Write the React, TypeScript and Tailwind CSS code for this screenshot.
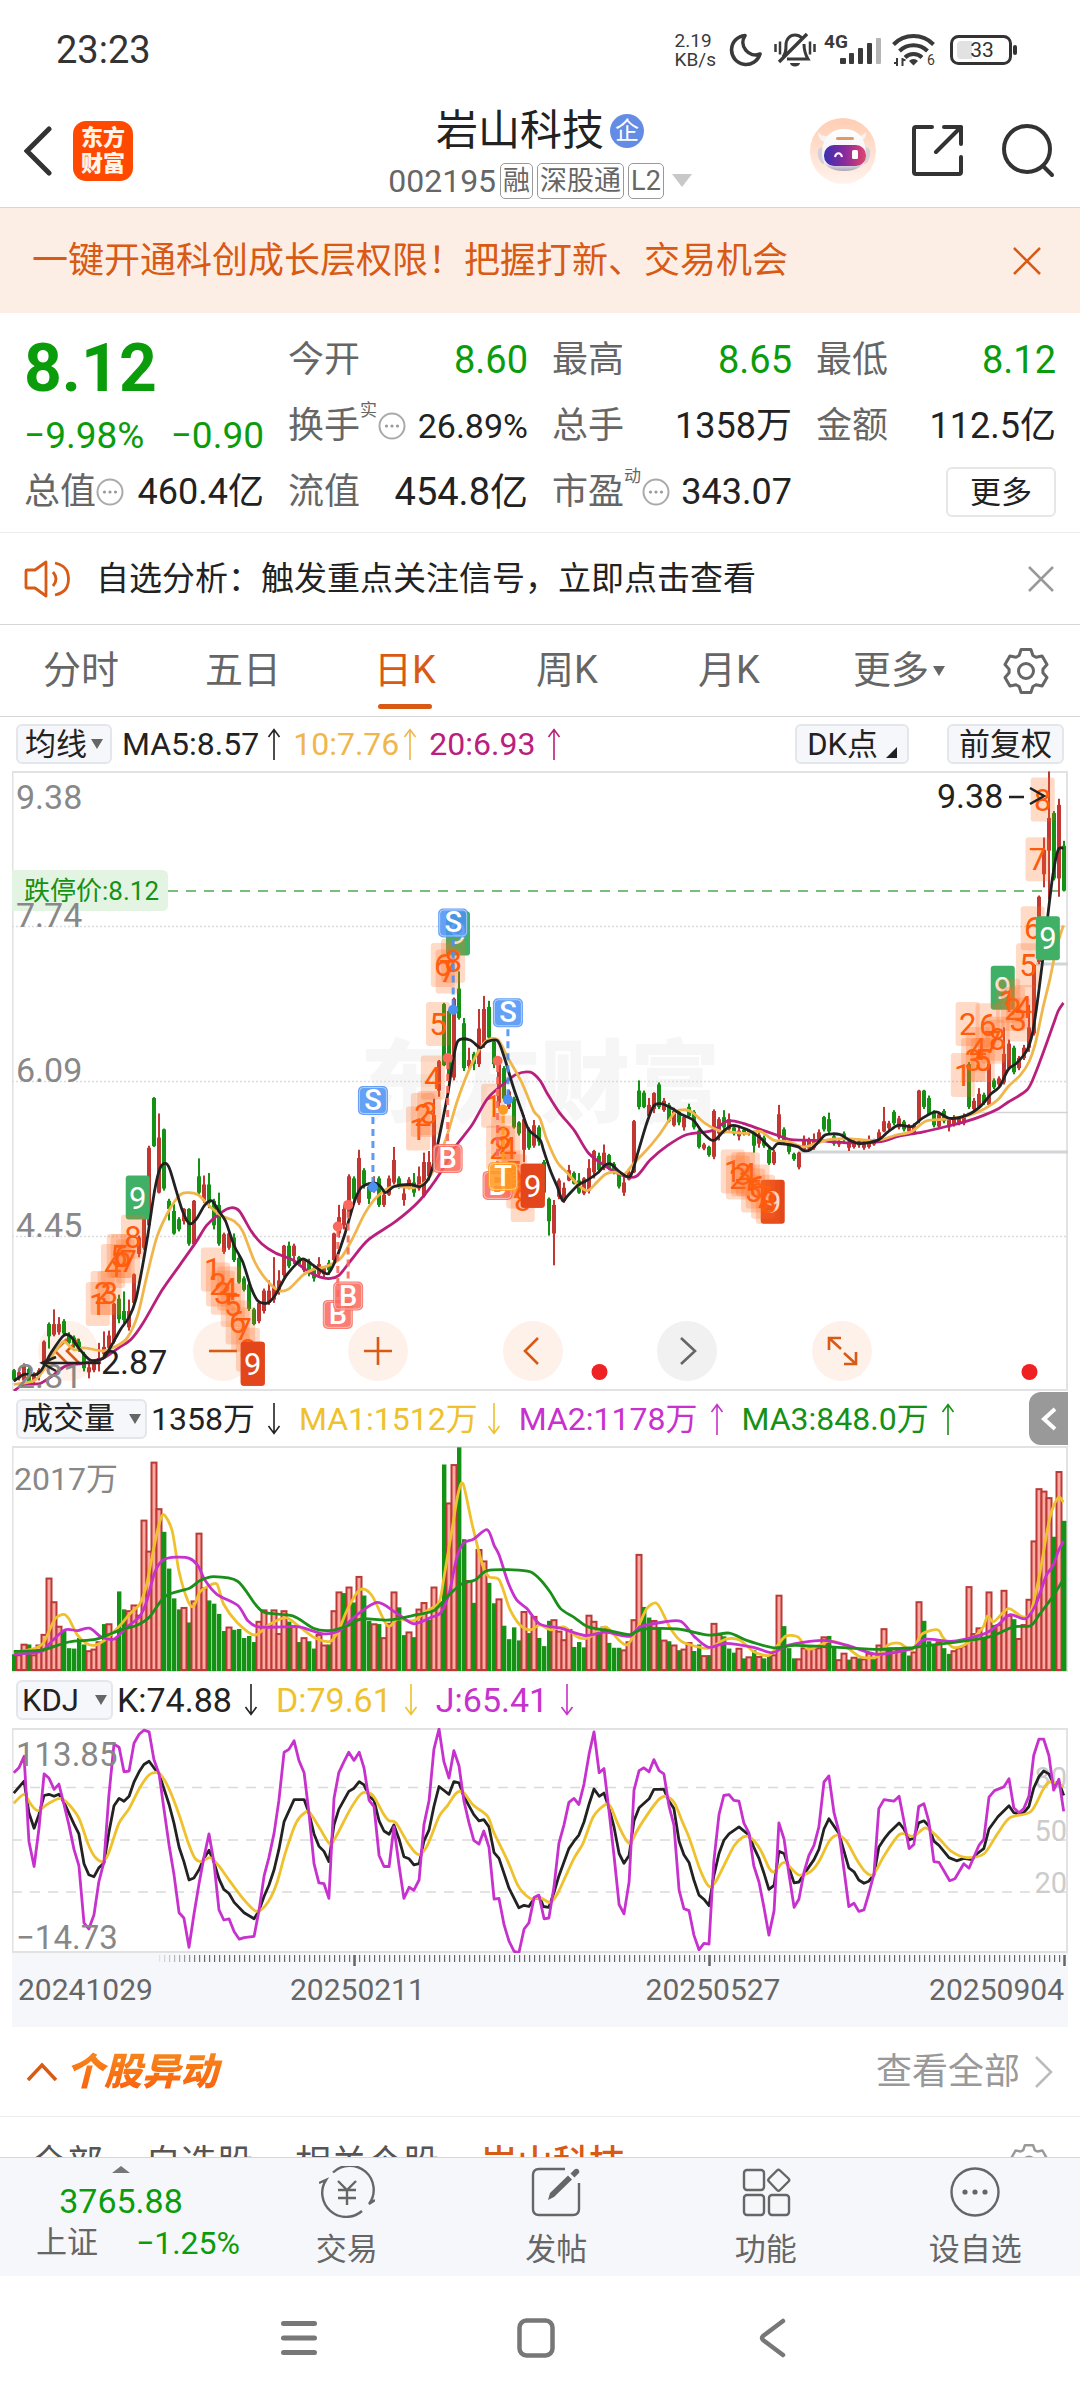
import React from "react";

const RED = "#c23732";
const GREEN = "#159115";
const ORANGE = "#d85a14";

/* ---------- chart data ---------- */

// Plot units per pixel, horizontally and vertically.
const UX = 2.904;
const UY = 2.45;

// One candle per trading day: colour, high, body top, body bottom, low.
const CANDLES = `
g 1492 1495 1518 1520|r 1490 1500 1515 1520|r 1478 1485 1520 1525|g 1488 1492 1525 1530|r 1500 1505 1520 1528|r 1490 1495 1510 1520
r 1422 1425 1475 1490|g 1378 1382 1412 1442|r 1346 1382 1408 1412|r 1365 1382 1402 1408|g 1370 1375 1405 1412|g 1402 1410 1428 1432
g 1410 1415 1430 1440|g 1418 1425 1440 1450|g 1450 1455 1490 1498|r 1480 1488 1500 1515|r 1475 1480 1495 1500|r 1428 1465 1480 1498
r 1400 1438 1455 1460|r 1398 1410 1440 1460|r 1330 1332 1425 1430|g 1310 1320 1370 1380|g 1302 1350 1372 1380|r 1322 1350 1390 1398
r 1258 1260 1330 1334|r 1165 1170 1210 1218|r 1100 1110 1195 1200|r 945 950 1140 1150|g 826 828 946 948|r 866 925 1060 1062
g 903 905 1050 1055|g 1075 1080 1100 1128|g 1088 1105 1160 1163|g 1120 1125 1150 1155|r 1098 1100 1130 1138|g 1098 1100 1185 1190
r 1078 1080 1186 1188|g 976 1020 1060 1068|r 1018 1040 1080 1085|g 1012 1040 1085 1098|g 1075 1080 1140 1150|g 1060 1090 1185 1190
r 1158 1162 1205 1210|r 1150 1160 1195 1200|g 1160 1170 1225 1230|g 1215 1220 1280 1283|g 1265 1270 1298 1302|g 1280 1285 1345 1350
g 1342 1346 1382 1385|r 1325 1330 1375 1380|r 1295 1300 1350 1356|r 1275 1300 1330 1335|r 1218 1290 1322 1330|r 1250 1275 1300 1310
r 1188 1190 1262 1268|g 1180 1190 1240 1245|r 1185 1190 1215 1235|g 1215 1218 1235 1240|r 1220 1225 1250 1255|g 1222 1228 1250 1265
g 1240 1245 1270 1278|r 1218 1235 1260 1265|r 1240 1245 1260 1270|g 1225 1232 1250 1262|r 1158 1160 1225 1230|r 1090 1120 1160 1170
r 1090 1100 1140 1150|r 1015 1020 1120 1125|g 1020 1025 1075 1082|r 955 975 1085 1090|g 1000 1005 1040 1050|g 1035 1045 1075 1088
r 1020 1035 1055 1060|g 1020 1025 1090 1095|r 1060 1065 1090 1095|r 1018 1025 1065 1068|r 948 980 1035 1040|g 1020 1025 1045 1050
r 1045 1062 1078 1092|r 1022 1028 1048 1052|g 1012 1035 1060 1070|r 996 1020 1050 1055|r 962 985 1068 1072|r 958 985 1020 1030
r 830 870 985 990|r 735 738 810 825|g 595 598 748 750|g 612 615 785 790|r 582 585 778 785|g 518 560 632 636
g 632 645 755 762|r 705 735 750 760|g 715 720 745 760|r 610 658 745 752|r 578 610 698 705|g 590 605 680 685
g 685 690 745 755|r 735 740 840 855|g 750 755 830 835|r 808 812 850 855|g 825 830 900 903|g 885 888 915 920
r 870 880 955 985|g 900 905 950 955|r 882 895 945 950|g 895 900 935 945|g 980 985 1060 1075|g 1072 1075 1130 1165
r 1078 1090 1160 1238|r 1025 1030 1070 1076|r 1035 1048 1080 1085|r 992 1005 1030 1032|g 1008 1012 1038 1040|g 1012 1030 1060 1063
r 1022 1025 1062 1066|r 978 1000 1055 1062|r 955 958 1010 1025|g 962 970 1005 1012|r 942 962 1000 1005|g 965 968 1000 1005
g 985 990 1010 1015|g 1010 1012 1045 1050|r 1020 1035 1060 1068|r 1002 1010 1028 1030|r 882 885 1010 1012|g 785 810 850 856
g 810 815 850 853|r 828 845 872 878|r 814 816 855 865|g 790 795 850 855|r 828 835 858 862|g 840 845 885 888
r 852 860 895 898|g 858 862 888 895|r 870 875 900 908|g 842 850 872 876|g 858 862 900 905|g 905 908 948 952
r 938 942 952 956|g 945 948 968 972|r 856 860 972 978|r 875 880 915 932|g 858 875 900 915|r 866 880 905 908
g 895 900 915 920|r 900 908 922 932|g 902 906 916 920|r 904 908 915 920|g 908 912 945 962|r 912 918 940 950
g 920 925 945 950|g 950 955 988 992|r 955 960 988 992|r 845 868 925 930|g 900 905 935 940|g 930 935 960 966
g 962 965 978 982|r 960 962 998 1003|r 920 930 955 958|r 925 930 952 958|r 915 930 950 955|r 905 912 935 940
g 872 875 905 910|g 864 880 910 915|g 918 922 940 945|r 930 935 942 948|g 910 915 930 940|r 930 935 950 958
r 930 935 948 952|r 930 934 944 950|r 930 935 950 955|r 920 930 948 952|r 928 932 942 945|r 905 912 930 935
r 850 885 910 912|r 884 890 902 908|g 858 862 890 895|r 872 878 900 905|g 882 886 905 910|r 892 898 910 918
r 890 895 912 918|r 808 810 885 890|g 808 810 850 855|g 822 828 868 870|g 858 862 895 900|r 862 868 898 902
g 855 860 885 890|r 875 880 900 910|r 870 876 893 898|r 872 878 890 895|r 866 872 890 895|g 740 745 850 855
r 828 835 855 862|r 804 818 850 855|g 815 820 840 845|r 738 745 845 850|g 780 785 802 806|r 775 780 795 800
r 655 720 790 795|r 685 695 755 760|g 700 705 765 770|r 725 730 755 760|r 698 705 730 735|r 600 655 705 715
r 500 502 670 675|r 332 335 495 500|r 190 220 280 312|r 28 142 222 342|g 125 130 290 295|r 95 110 290 335|g 198 210 320 322`
  .trim()
  .split(/[|\n]/)
  .map((row) => {
    const [colour, ...v] = row.trim().split(" ");
    return { up: colour === "r", v: v.map(Number) };
  });

// Traded volume per day, as the top edge of its bar.
const VOLUMES = `g672 r672 r646 g648 r672 r648 r622 r484 r542 r602 g615 g657 g658 g632 g648 r662 r658 r640 g598 r596 r632 g518 g562 r564 r550 r575 r342 r418 r200 r314
g372 g462 g535 g562 r556 g594 r540 r374 r508 g540 g548 g573 g615 r604 g612 g610 g632 g627 g642 r590 r562 r598 r562 r620 r564 g592 r600 g642 r630 g640
g658 r622 r648 g648 r564 r518 g522 r506 g545 r480 g528 g590 r596 g598 r630 r595 r518 g557 g625 r616 g630 r560 r544 g588 r506 r548 g207 r300 r206 g165
g390 r490 g546 r414 r442 g497 g547 r535 g602 g635 g606 g638 r566 g620 r578 g632 g652 g590 r586 r614 r635 r610 g654 g642 g655 r575 r590 g618 r604 g644
g656 g656 r660 r640 r586 r426 g556 g582 r588 g608 r636 g640 r648 g662 r658 r642 g664 g648 r674 g674 r595 r622 g628 g658 g668 r656 g682 r677 g662 r676
g682 g675 r672 r526 g603 g657 g682 r682 r655 r655 r655 r655 r628 g627 g655 r684 r668 g685 r678 g682 r682 r668 g684 r648 r608 g655 r655 r662 g664 g675
r665 r542 g590 g640 g650 r640 g657 g671 r662 r655 r650 r505 r620 r606 g632 r518 g600 r598 r514 r575 g586 r632 r598 r536 r393 r265 r271 r287 g384 r223 g345`
  .trim()
  .split(/\s+/)
  .map((s) => ({ up: s[0] === "r", top: Number(s.slice(1)) }));

// Each line is two halves; the second half starts at 1568 units.
const MA5 = [
  "40,1522 70,1505 100,1507 120,1495 150,1450 185,1410 205,1412 228,1440 262,1470 300,1466 320,1440 350,1395 375,1365 395,1320 415,1235 430,1160 450,1050 465,1000 480,988 492,1000 510,1050 530,1105 550,1136 570,1125 595,1090 615,1080 635,1105 655,1130 680,1190 705,1230 730,1295 750,1326 778,1330 800,1310 830,1265 860,1235 880,1222 905,1235 930,1250 953,1258 975,1225 1000,1165 1030,1080 1050,1047 1085,1036 1105,1045 1120,1060 1145,1045 1190,1040 1220,1045 1245,1025 1260,985 1280,905 1300,820 1315,740 1330,688 1365,686 1395,705 1415,690 1445,688 1465,730 1490,800 1515,860 1535,905 1568,930",
  "10,955 30,1005 50,1045 66,1080 80,1068 110,1042 140,1028 170,1010 190,992 207,990 230,1008 262,1020 285,960 310,890 330,848 350,842 380,852 410,868 445,882 470,910 495,930 510,930 535,908 560,895 600,905 635,922 660,943 675,953 690,940 720,942 750,948 765,957 785,955 810,935 830,918 870,917 900,932 930,940 980,932 1010,912 1040,895 1080,898 1110,878 1150,862 1190,878 1240,870 1280,848 1310,818 1335,800 1360,758 1385,742 1415,710 1430,670 1445,590 1460,490 1475,380 1490,280 1505,220 1520,216",
];
const MA10 = [
  "40,1530 100,1520 130,1490 155,1455 185,1425 215,1445 245,1440 300,1448 340,1435 370,1415 400,1360 425,1270 455,1170 490,1105 520,1068 540,1060 575,1065 605,1090 640,1115 680,1130 705,1155 740,1230 775,1275 810,1300 840,1295 880,1262 910,1248 950,1240 990,1220 1025,1170 1060,1110 1095,1070 1140,1045 1200,1048 1240,1030 1270,985 1300,915 1330,830 1370,745 1410,690 1445,685 1475,730 1515,790 1550,860 1568,878",
  "20,930 50,985 80,1012 110,1040 138,1055 165,1035 190,1015 215,1010 245,1015 270,990 305,960 345,920 390,865 415,857 440,862 480,890 520,908 560,912 600,915 640,910 680,932 720,935 765,948 800,940 840,930 900,928 980,932 1030,920 1080,910 1120,885 1180,880 1240,872 1290,855 1330,832 1360,800 1395,772 1420,740 1440,690 1460,610 1480,540 1500,460 1520,405",
];
const MA20 = [
  "40,1546 70,1530 115,1528 150,1510 190,1485 240,1478 300,1465 345,1440 380,1420 415,1380 470,1300 520,1240 570,1180 600,1140 640,1110 670,1097 695,1105 730,1155 760,1185 800,1208 850,1225 890,1250 930,1267 960,1270 985,1262 1020,1225 1070,1175 1150,1130 1220,1078 1280,1010 1320,950 1370,895 1415,830 1460,795 1500,770 1540,765 1568,785",
  "20,815 55,862 100,908 140,962 190,995 240,1018 280,1020 320,980 370,945 425,918 500,908 545,884 590,890 640,905 685,918 730,930 800,932 900,938 990,935 1040,922 1110,912 1180,898 1240,885 1290,870 1330,855 1360,838 1415,808 1440,765 1460,720 1490,650 1505,615 1520,595",
];
const VOL_MA1 = [
  "40,668 100,658 125,645 140,620 160,585 185,574 200,585 225,625 250,645 275,650 300,640 320,625 350,600 380,570 405,550 425,505 440,440 460,360 475,330 500,370 520,470 545,540 562,555 580,520 605,505 630,500 650,550 690,595 740,625 780,600 830,582 870,605 915,632 960,640 985,610 1010,560 1045,514 1080,528 1125,602 1155,585 1200,590 1240,565 1275,545 1290,480 1310,380 1330,280 1345,255 1370,350 1400,450 1420,482 1450,490 1480,560 1510,600 1540,612 1568,600",
  "30,612 70,605 110,630 140,632 190,605 230,638 255,648 285,605 310,560 335,546 350,560 380,610 410,640 450,652 490,657 540,635 580,637 620,665 665,675 690,650 715,627 750,630 780,660 840,640 880,648 930,678 980,678 1010,650 1045,645 1080,662 1110,622 1155,612 1170,630 1200,655 1240,645 1285,608 1300,578 1318,592 1360,560 1400,580 1425,570 1450,480 1480,340 1505,288 1520,300",
];
const VOL_MA2 = [
  "40,672 120,665 150,640 190,612 225,614 260,608 295,630 330,635 370,605 405,580 425,545 450,470 475,440 515,434 550,437 575,455 595,490 630,525 690,552 720,590 750,605 820,605 870,605 940,622 990,612 1030,580 1095,545 1150,570 1200,597 1250,582 1280,570 1305,520 1325,440 1345,400 1375,390 1415,367 1435,405 1450,430 1475,495 1500,538 1530,560 1568,598",
  "60,608 130,626 190,618 260,628 290,605 360,593 410,592 450,630 490,655 540,645 620,655 675,668 720,650 820,638 900,652 980,672 1080,658 1120,635 1200,640 1290,622 1330,600 1365,575 1410,585 1440,550 1470,480 1490,455 1505,420 1520,395",
];
const VOL_MA3 = [
  "40,665 120,662 200,642 280,635 350,612 400,600 435,580 480,530 550,510 580,492 620,482 690,493 740,548 770,570 850,578 910,608 955,614 1010,602 1050,585 1130,588 1210,575 1260,565 1300,530 1340,500 1380,490 1415,467 1490,465 1540,470 1568,488",
  "30,520 60,560 100,582 140,605 200,614 260,624 300,610 400,610 490,625 550,620 600,638 680,656 740,650 840,654 980,660 1080,656 1130,650 1230,640 1310,628 1375,605 1425,602 1450,575 1490,530 1520,488",
];
const KDJ_J = [
  "40,962 55,950 70,922 84,1130 99,1192 113,1100 128,965 142,975 157,1003 171,990 186,1040 200,1090 215,1150 229,1190 244,1330 258,1345 273,1310 287,1230 302,1180 316,1020 331,892 346,900 360,960 375,958 389,890 404,868 418,858 433,862 447,930 462,965 476,1050 491,1140 505,1210 520,1305 534,1318 549,1390 563,1310 578,1235 592,1170 607,1112 621,1180 636,1298 650,1323 665,1320 680,1352 695,1370 709,1366 738,1363 752,1300 767,1215 781,1170 796,1110 810,1030 825,912 839,905 854,884 868,932 883,962 897,1060 912,1185 926,1232 941,1234 955,1270 970,1025 984,962 999,935 1013,912 1028,932 1043,912 1057,950 1072,1030 1086,1045 1101,1165 1115,1192 1130,1192 1144,1095 1159,1190 1173,1270 1188,1243 1202,1250 1217,1225 1231,1090 1246,1030 1260,905 1275,855 1289,935 1304,975 1318,908 1333,945 1347,1030 1362,1085 1376,1128 1391,1137 1405,1105 1420,1145 1435,1272 1449,1270 1464,1335 1478,1375 1493,1400 1507,1403 1522,1345 1536,1330 1551,1268 1565,1262",
  "12,1320 26,1318 41,1240 55,1135 70,1090 84,1035 99,1025 113,1040 128,990 143,915 157,862 172,962 186,952 201,1060 215,1165 230,1285 244,1308 259,1230 273,1005 288,957 302,950 317,960 331,930 346,957 360,965 375,1045 389,1090 404,1250 418,1295 433,1300 447,1360 462,1396 476,1380 491,1382 505,1180 520,1065 534,1018 549,1016 563,1030 578,1032 592,1085 607,1110 621,1190 636,1230 650,1290 665,1360 680,1300 694,1085 709,1125 723,1210 738,1292 752,1272 767,1205 781,1165 796,1140 810,1095 825,985 839,970 854,1060 868,1105 883,1200 897,1290 912,1282 926,1302 941,1298 955,1258 970,1210 984,1050 999,1028 1028,1032 1043,1020 1057,1080 1072,1148 1086,1138 1100,1045 1115,1038 1129,1080 1144,1180 1159,1182 1190,1227 1205,1222 1231,1185 1246,1196 1275,1140 1289,1125 1304,1022 1320,1006 1347,997 1362,977 1376,1048 1391,1060 1405,1050 1420,1020 1434,920 1449,880 1463,880 1478,920 1492,1005 1507,978 1521,1057",
];
const KDJ_K = [
  "40,1012 70,983 84,1060 99,1098 113,1065 128,1018 142,1015 157,1020 171,1015 186,1035 215,1088 229,1112 244,1185 258,1212 273,1217 287,1195 302,1183 316,1110 331,1043 346,1025 360,1032 375,1020 389,985 404,960 418,942 433,934 447,950 462,965 491,1040 505,1085 520,1145 534,1180 549,1225 563,1220 578,1200 592,1172 607,1152 621,1180 636,1222 650,1248 665,1258 680,1280 709,1305 738,1320 752,1300 767,1265 781,1238 796,1200 810,1150 825,1082 854,1028 883,1028 897,1060 912,1112 926,1142 941,1155 955,1180 970,1090 984,1052 1013,1008 1028,1000 1043,984 1057,992 1072,1020 1086,1030 1101,1080 1115,1105 1130,1113 1144,1090 1159,1125 1173,1168 1188,1173 1202,1188 1217,1185 1231,1130 1246,1102 1260,1045 1275,996 1304,1015 1318,984 1333,987 1347,1020 1376,1065 1391,1080 1405,1077 1420,1095 1435,1158 1449,1172 1478,1245 1507,1293 1522,1287 1536,1290 1551,1270 1568,1268",
  "10,1290 26,1292 41,1255 55,1215 84,1148 99,1130 113,1115 128,1083 143,1038 157,1002 172,1020 186,1012 201,1050 215,1095 230,1160 244,1184 259,1165 273,1080 288,1048 317,1026 331,1003 360,1003 375,1032 389,1050 404,1130 418,1163 433,1182 447,1225 462,1262 476,1272 491,1288 505,1215 520,1160 534,1128 549,1112 578,1095 607,1115 621,1145 636,1172 650,1207 665,1248 680,1238 694,1155 709,1160 723,1195 738,1232 752,1230 767,1210 796,1175 810,1150 825,1100 839,1075 868,1110 897,1195 912,1205 926,1225 941,1233 955,1228 970,1212 984,1145 999,1125 1013,1110 1043,1085 1057,1100 1072,1127 1086,1122 1100,1085 1115,1080 1129,1092 1144,1130 1159,1140 1188,1170 1210,1178 1231,1172 1255,1175 1270,1160 1289,1148 1304,1100 1330,1070 1362,1043 1376,1060 1391,1063 1405,1060 1420,1045 1434,1000 1449,972 1463,958 1478,965 1492,990 1507,985 1521,1018",
];
const KDJ_D = [
  "40,1037 70,1015 90,1040 110,1055 140,1038 175,1025 200,1040 230,1075 255,1135 275,1168 298,1180 315,1160 345,1087 375,1050 405,1000 430,970 447,962 465,965 490,1000 520,1065 545,1130 565,1170 585,1180 610,1170 635,1190 665,1225 705,1270 740,1300 760,1297 785,1270 805,1230 830,1155 860,1085 885,1060 900,1060 930,1100 958,1137 975,1120 1015,1055 1045,1017 1065,1010 1085,1020 1115,1065 1130,1080 1150,1085 1185,1135 1215,1163 1240,1142 1275,1070 1300,1042 1325,1012 1345,1010 1375,1042 1415,1068 1435,1110 1475,1180 1505,1240 1540,1270 1568,1268",
  "30,1280 50,1260 75,1215 100,1170 125,1135 155,1070 190,1040 205,1045 225,1085 245,1120 262,1135 285,1100 320,1055 345,1028 365,1020 390,1035 415,1085 435,1125 465,1200 490,1240 510,1230 540,1180 565,1140 590,1120 610,1120 640,1150 665,1195 680,1205 710,1182 750,1212 785,1205 810,1180 840,1130 865,1115 890,1130 920,1175 945,1205 968,1212 1000,1165 1045,1113 1085,1118 1120,1097 1155,1120 1195,1155 1240,1170 1290,1160 1330,1110 1365,1072 1425,1058 1460,1005 1480,985 1521,997",
];

// Nine-turn counts: centres of the tags 1 to 8, then the closing 9.
type Run = { tags: number[][]; nine: number[]; up: boolean };
const RUNS: Run[] = [
  { up: true, nine: [400, 1072], tags: [[284, 1333], [298, 1306], [318, 1306], [328, 1240], [345, 1215], [356, 1215], [372, 1228], [386, 1168]] },
  { up: false, nine: [734, 1479], tags: [[618, 1248], [633, 1285], [647, 1305], [665, 1295], [676, 1335], [690, 1378], [706, 1395], [720, 1445]] },
  { up: true, nine: [1330, 425], tags: [[1214, 903], [1228, 870], [1246, 865], [1257, 778], [1272, 647], [1286, 502], [1300, 518], [1316, 492]] },
  { up: false, nine: [1547, 1043], tags: [[1432, 847], [1446, 950], [1461, 925], [1476, 950], [1490, 1010], [1495, 1020], [1505, 1045], [1518, 1078]] },
  { up: false, nine: [2244, 1082], tags: [[2128, 1008], [2143, 1023], [2158, 1015], [2172, 1015], [2187, 1055], [2200, 1045], [2216, 1070], [2230, 1083]] },
  { up: true, nine: [2912, 558], tags: [[2796, 772], [2810, 647], [2826, 735], [2840, 708], [2854, 735], [2868, 650], [2883, 690], [2897, 683]] },
  { up: true, nine: [3043, 437], tags: [[2928, 590], [2942, 610], [2957, 636], [2973, 605], [2985, 503], [2999, 412], [3013, 243], [3028, 97]] },
];

const SIGNALS = [
  { t: "B", x: 981, y: 1357, dot: 1143 },
  { t: "B", x: 1011, y: 1312, dot: 1090 },
  { t: "S", x: 1083, y: 833, dot: 1047 },
  { t: "B", x: 1300, y: 975, dot: 730 },
  { t: "S", x: 1316, y: 398, dot: 612 },
  { t: "B", x: 1445, y: 1041, dot: 737 },
  { t: "T", x: 1461, y: 1019, dot: 857 },
  { t: "S", x: 1475, y: 618, dot: 832 },
];
const SIGNAL_FILL: Record<string, string> = { S: "#4a90f5", B: "#f9695c", T: "#ff9a1f" };

const sx = (x: number) => x / UX - 12;
const barX = (i: number) => 2 + 5 * i;

function toPoints(halves: string[], y0: number) {
  return halves.flatMap((half, h) =>
    half.split(" ").map((p) => {
      const [x, y] = p.split(",").map(Number);
      return [sx(x + h * 1568), y / UY - y0];
    }),
  );
}

function smooth(pts: number[][]) {
  let d = `M${pts[0][0].toFixed(1)} ${pts[0][1].toFixed(1)}`;
  for (let i = 0; i < pts.length - 1; i++) {
    const a = pts[Math.max(i - 1, 0)];
    const b = pts[i];
    const c = pts[i + 1];
    const e = pts[Math.min(i + 2, pts.length - 1)];
    const k = 7;
    d += `C${(b[0] + (c[0] - a[0]) / k).toFixed(1)} ${(b[1] + (c[1] - a[1]) / k).toFixed(1)} ${(c[0] - (e[0] - b[0]) / k).toFixed(1)} ${(c[1] - (e[1] - b[1]) / k).toFixed(1)} ${c[0].toFixed(1)} ${c[1].toFixed(1)}`;
  }
  return d;
}

function Line({ data, y0, color, straight }: { data: string[]; y0: number; color: string; straight?: boolean }) {
  const pts = toPoints(data, y0);
  const d = straight ? "M" + pts.map((p) => `${p[0].toFixed(1)} ${p[1].toFixed(1)}`).join("L") : smooth(pts);
  return <path d={d} fill="none" stroke={color} strokeWidth={2.8} strokeLinejoin="round" />;
}

/* ---------- icons ---------- */

function gearPath(c: number, outer: number, inner: number) {
  const pts: string[] = [];
  for (let k = 0; k < 6; k++) {
    const steps = [[-24, inner], [-13, outer], [13, outer], [24, inner]];
    for (const [off, r] of steps) {
      const a = ((-90 + 60 * k + off) * Math.PI) / 180;
      pts.push(`${(c + r * Math.cos(a)).toFixed(1)} ${(c + r * Math.sin(a)).toFixed(1)}`);
    }
  }
  return "M" + pts.join("L") + "Z";
}

function Gear({ size, color }: { size: number; color: string }) {
  return (
    <svg width={size} height={size} viewBox="0 0 48 48" fill="none" stroke={color} strokeWidth={3} strokeLinejoin="round">
      <path d={gearPath(24, 22, 17)} />
      <circle cx={24} cy={24} r={7.5} />
    </svg>
  );
}

function Dots() {
  return (
    <svg width={28} height={28} viewBox="0 0 28 28" className="shrink-0" fill="none">
      <circle cx={14} cy={14} r={12.5} stroke="#aaa" strokeWidth={2} />
      <g fill="#999">
        <circle cx={8.5} cy={14} r={1.6} />
        <circle cx={14} cy={14} r={1.6} />
        <circle cx={19.5} cy={14} r={1.6} />
      </g>
    </svg>
  );
}

function Trend({ dir, color }: { dir: "up" | "down"; color: string }) {
  return (
    <svg width={14} height={32} viewBox="0 0 14 32" className="shrink-0" fill="none" stroke={color} strokeWidth={1.6}>
      {dir === "up" ? <path d="M7 32V2M1.500 9 7 1.500 12.500 9" /> : <path d="M7 0v30M1.500 23 7 30.500 12.500 23" />}
    </svg>
  );
}

function Caret({ size = 12 }: { size?: number }) {
  return (
    <svg width={size} height={size} viewBox="0 0 12 12" className="shrink-0">
      <path d="M0 1h12L6 11z" fill="#666" />
    </svg>
  );
}

function StatusIcons() {
  return (
    <div className="flex items-center text-[#3a3a3a]">
      <div className="text-[19px] leading-[19px]">
        <div>2.19</div>
        <div>KB/s</div>
      </div>
      <svg width={34} height={34} viewBox="0 0 34 34" className="ml-3" fill="none" stroke="currentColor" strokeWidth={3.6} strokeLinejoin="round">
        <path d="M17 2.500A14.500 14.500 0 1 0 32 21 12.500 12.500 0 0 1 17 2.500Z" />
      </svg>
      <svg width={42} height={36} viewBox="0 0 42 36" className="ml-3" fill="none" stroke="currentColor" strokeWidth={3}>
        <path d="M9 25c3-4 3-7 3-12 0-6 4-10 9-10 3 0 5 1 7 3M30 12c0 6 1 10 4 15H13" />
        <path d="M5 30 33 2" strokeWidth={3.400} />
        <path d="M1.500 12v8M6 9.500v13M40.500 12v8M36 9.500v13" strokeWidth={2.500} />
        <path d="M16 31h10a5 3.500 0 0 1-10 0Z" fill="currentColor" stroke="none" />
      </svg>
      <svg width={60} height={34} viewBox="0 0 60 34" className="ml-2" fill="currentColor">
        <text x={0} y={15} fontSize={19} fontWeight={700}>4G</text>
        <rect x={16} y={25} width={6} height={6} rx={1} />
        <rect x={25} y={20} width={5} height={11} rx={1} />
        <rect x={34} y={15} width={5} height={16} rx={1} />
        <rect x={43} y={10} width={5} height={21} rx={1} />
        <rect x={52} y={5} width={5} height={26} rx={1} fill="#b5b5b5" />
      </svg>
      <svg width={46} height={34} viewBox="0 0 46 34" className="ml-2" fill="none" stroke="currentColor" strokeWidth={4}>
        <path d="M1.500 11.500a28 28 0 0 1 40 0" />
        <path d="M7.500 18a20 20 0 0 1 28 0" />
        <path d="M13 24.500a12 12 0 0 1 17 0" />
        <path d="M17 28a6 6 0 0 1 9 0l-4.500 4.500Z" fill="currentColor" stroke="none" />
        <path d="M5 25v8M10.500 25v8M2 30h3M10.500 27h3" strokeWidth={2} />
        <text x={35} y={32} fontSize={14} fill="currentColor" stroke="none">6</text>
      </svg>
      <svg width={68} height={30} viewBox="0 0 68 30" className="ml-3" fill="none">
        <rect x={1.500} y={1.500} width={59} height={27} rx={7} stroke="#333" strokeWidth={3} />
        <path d="M11 6h11v18H11a4 4 0 0 1-4-4V10a4 4 0 0 1 4-4Z" fill="#e2e2e2" />
        <rect x={63} y={10} width={4} height={10} rx={2} fill="#333" />
        <text x={32} y={22} fontSize={21} textAnchor="middle" fill="#333">33</text>
      </svg>
    </div>
  );
}

function Robot() {
  return (
    <svg width={66} height={66} viewBox="0 0 66 66">
      <defs>
        <linearGradient id="halo" x1="0" y1="0" x2="0" y2="1">
          <stop offset="0" stopColor="#ffcdb3" />
          <stop offset="1" stopColor="#fff3ec" />
        </linearGradient>
        <linearGradient id="visor" x1="0" y1="0" x2="1" y2="0">
          <stop offset="0" stopColor="#3a2fb0" />
          <stop offset="0.500" stopColor="#8a2a9c" />
          <stop offset="1" stopColor="#e0466a" />
        </linearGradient>
        <linearGradient id="shell" x1="0" y1="0" x2="0" y2="1">
          <stop offset="0" stopColor="#ffffff" />
          <stop offset="0.800" stopColor="#f1eef3" />
          <stop offset="1" stopColor="#a9a3b6" />
        </linearGradient>
      </defs>
      <circle cx={33} cy={33} r={33} fill="url(#halo)" />
      <path d="M8 14c0 5 2 8 6 10l6-6c-5 1-9 0-12-4ZM56 14c0 5-2 8-6 10l-6-6c5 1 9 0 12-4Z" fill="#f8f2f2" />
      <path d="M8 32c2-3 4-3 6-2v16c-4-1-7-7-6-14ZM60 32c-2-3-4-3-6-2v16c4-1 7-7 6-14Z" fill="#d5d0d8" />
      <path d="M12 36c0-15 8-25 22-25s22 10 22 25c0 11-8 17-22 17s-22-6-22-17Z" fill="url(#shell)" />
      <rect x={26} y={19} width={18} height={3} rx={1.500} fill="#e39a62" />
      <rect x={14} y={27} width={42} height={21} rx={10} fill="url(#visor)" />
      <path d="M25 39c1-5 6-5 7 0" fill="none" stroke="#fff" strokeWidth={2} />
      <rect x={42} y={32} width={6} height={9} rx={1.500} fill="#fff" />
    </svg>
  );
}

/* ---------- page parts ---------- */

function Header() {
  return (
    <header className="flex h-[132px] items-center justify-between border-b border-[#d6d6d6] px-6 pt-[18px]">
      <div className="flex w-[300px] items-center">
        <button aria-label="返回">
          <svg width={28} height={50} viewBox="0 0 28 50" fill="none" stroke="#333" strokeWidth={5} strokeLinecap="round">
            <path d="M25 3 3 25l22 22" />
          </svg>
        </button>
        <div className="ml-[21px] grid size-[60px] place-content-center rounded-[13px] bg-[#ff4800] text-center text-[22px] leading-[26px] font-black text-[#fff3ea]">
          东方<br />财富
        </div>
      </div>
      <div className="flex flex-col items-center pt-1">
        <div className="flex items-center gap-[6px]">
          <h1 className="text-[42px] leading-[48px] text-[#222]">岩山科技</h1>
          <span className="grid size-[34px] place-content-center rounded-full bg-[#648ce4] text-[24px] leading-6 text-white">企</span>
        </div>
        <button className="mt-2 flex items-center gap-1 text-[#666]">
          <span className="text-[32px] leading-9">002195</span>
          {["融", "深股通", "L2"].map((t) => (
            <span key={t} className="rounded-[5px] border border-[#999] px-[2px] text-[27px] leading-[34px]">{t}</span>
          ))}
          <svg width={20} height={14} viewBox="0 0 20 14" className="ml-1">
            <path d="M0 0h20L10 13z" fill="#c8c8c8" />
          </svg>
        </button>
      </div>
      <div className="flex w-[300px] items-center justify-end">
        <button aria-label="智能助手"><Robot /></button>
        <button aria-label="分享" className="ml-9">
          <svg width={52} height={52} viewBox="0 0 52 52" fill="none" stroke="#333" strokeWidth={4} strokeLinecap="round" strokeLinejoin="round">
            <path d="M20 2H4Q2 2 2 4v43q0 2 2 2h43q2 0 2-2V32M32 2h17v17M49 2 24 27" />
          </svg>
        </button>
        <button aria-label="搜索" className="ml-[38px]">
          <svg width={54} height={54} viewBox="0 0 54 54" fill="none" stroke="#333" strokeWidth={4} strokeLinecap="round">
            <circle cx={25} cy={25} r={23} />
            <path d="m41 42 9 9" />
          </svg>
        </button>
      </div>
    </header>
  );
}

function Cell({ label, sup, dots, value, valueClass }: { label: string; sup?: string; dots?: boolean; value: string; valueClass: string }) {
  return (
    <div className="flex items-center justify-between whitespace-nowrap">
      <dt className="flex items-center text-[36px] text-[#666]">
        {label}
        {sup && <sup className="-top-4 w-[18px] text-[17px] leading-4">{sup}</sup>}
        {dots && <Dots />}
      </dt>
      <dd className={valueClass}>{value}</dd>
    </div>
  );
}

function Quote() {
  return (
    <section className="border-b border-[#ececec] px-6 pt-[14px] pb-[7px]">
      <dl className="grid auto-rows-[66px] grid-cols-4 gap-x-6 leading-none">
        <div className="row-span-2 flex flex-col text-[#0b9c0b]">
          <dd className="pt-2 text-[66px] leading-[68px] font-bold">8.12</dd>
          <dd className="mt-[14px] flex justify-between text-[37px]">
            <span>−9.98%</span>
            <span>−0.90</span>
          </dd>
        </div>
        <Cell label="今开" value="8.60" valueClass="text-[38px] text-[#0b9c0b]" />
        <Cell label="最高" value="8.65" valueClass="text-[38px] text-[#0b9c0b]" />
        <Cell label="最低" value="8.12" valueClass="text-[38px] text-[#0b9c0b]" />
        <Cell label="换手" sup="实" dots value="26.89%" valueClass="text-[34px] text-[#222]" />
        <Cell label="总手" value="1358万" valueClass="text-[36px] text-[#222]" />
        <Cell label="金额" value="112.5亿" valueClass="text-[36px] text-[#222]" />
        <Cell label="总值" dots value="460.4亿" valueClass="text-[36px] text-[#222]" />
        <Cell label="流值" value="454.8亿" valueClass="text-[38px] text-[#222]" />
        <Cell label="市盈" sup="动" dots value="343.07" valueClass="text-[36px] text-[#222]" />
        <div className="flex items-center justify-end">
          <button className="h-[50px] rounded-md border-2 border-[#e6e6e6] px-[22px] text-[31px] leading-none text-[#222]">更多</button>
        </div>
      </dl>
    </section>
  );
}

function Periods() {
  const tabs = ["分时", "五日", "日K", "周K", "月K", "更多"];
  return (
    <nav className="flex h-[92px] border-b border-[#d6d6d6]">
      <div className="grid flex-[9] grid-cols-6">
        {tabs.map((t) => (
          <button
            key={t}
            className={
              t === "日K"
                ? "relative flex items-center justify-center text-[38px] text-[#d85a14]"
                : t === "更多"
                  ? "flex items-center justify-center gap-1 pl-4 text-[38px] text-[#666]"
                  : "flex items-center justify-center text-[38px] text-[#666]"
            }
          >
            {t}
            {t === "更多" && <Caret />}
            {t === "日K" && <span className="absolute bottom-[7px] h-[5px] w-[54px] rounded-full bg-[#d85a14]" />}
          </button>
        ))}
      </div>
      <button aria-label="设置" className="grid flex-1 place-items-center">
        <Gear size={48} color="#666" />
      </button>
    </nav>
  );
}

const CHIP = "flex h-10 items-center rounded-md border-2 border-[#e3e6eb] bg-[#f6f7fa] text-[31px] leading-none text-[#222]";

function Reading({ text, dir, color, size, className }: { text: string; dir: "up" | "down"; color: string; size: string; className: string }) {
  return (
    <span className={`flex items-center whitespace-nowrap ${size} ${className}`} style={{ color }}>
      {text}
      <Trend dir={dir} color={color} />
    </span>
  );
}

function Badge({ x, y, digit, up }: { x: number; y: number; digit: number; up?: boolean }) {
  const cx = sx(x);
  const cy = y / UY - 11;
  const last = digit === 9;
  return (
    <g>
      <rect x={cx - 12} y={cy - 22} width={24} height={44} rx={3} fill={last ? (up ? "#3fb065" : "#e2461a") : "#ff6a1f"} fillOpacity={last ? 1 : 0.25} />
      <text x={cx} y={cy + 11} textAnchor="middle" fontSize={31} fill={last ? "#fff" : "#ff5a0a"}>{digit}</text>
    </g>
  );
}

function Signal({ t, x, y, dot }: { t: string; x: number; y: number; dot: number }) {
  const cx = sx(x);
  const cy = y / UY - 11;
  const dy = dot / UY - 11;
  const fill = SIGNAL_FILL[t];
  return (
    <g>
      <path d={`M${cx} ${cy + (dy > cy ? 17 : -17)}V${dy}`} stroke={fill} strokeWidth={3} strokeDasharray="7 5" strokeOpacity={0.9} />
      <circle cx={cx} cy={dy} r={5} fill={fill} />
      <rect x={cx - 15} y={cy - 14} width={30} height={29} rx={5} fill={fill} fillOpacity={0.86} />
      <rect x={cx - 13.500} y={cy - 12.500} width={27} height={26} rx={4} fill="none" stroke="#fff" strokeOpacity={0.500} strokeWidth={1} />
      <text x={cx} y={cy + 10} textAnchor="middle" fontSize={29} fontWeight={500} fill="#fff">{t}</text>
    </g>
  );
}

function PriceChart() {
  return (
    <svg viewBox="0 0 1056 620" className="pointer-events-none relative block h-auto w-full">
      <text x={528} y={344} textAnchor="middle" fontSize={90} fontWeight={900} fill="#f6f6f6">东方财富</text>
      <rect x={0.500} y={1} width={1054.500} height={618} fill="none" stroke="#e2e2e2" strokeWidth={2} />
      <path d="M0 155.500H1056M0 310.500H1056M0 465.500H1056" stroke="#dcdcdc" strokeWidth={1.500} strokeDasharray="2 2" />
      <path d="M1024 193H1056M786 381H1056" stroke="#d2d4d7" strokeWidth={3} />
      <path d="M955 341.500H1056" stroke="#d2d4d7" strokeWidth={1.500} />
      <path d="M156 120H1048" stroke="#4cab4c" strokeWidth={1.600} strokeDasharray="10 8" />
      <path d="M0 99h150q6 0 6 6v29q0 6-6 6H0Z" fill="#e3f4e3" />
      <text x={12} y={129} fontSize={26} fill="#159115">跌停价:8.12</text>
      {CANDLES.map(({ up, v }, i) => {
        const [h, a, b, l] = v.map((n) => n / UY - 11);
        return (
          <g key={i} fill={up ? RED : GREEN}>
            <rect x={barX(i) - 1} y={h} width={2} height={l - h} />
            <rect x={barX(i) - 2} y={a} width={4} height={Math.max(b - a, 1)} />
          </g>
        );
      })}
      {RUNS.map((run, r) => (
        <g key={r}>
          {run.tags[0][0] === 2928 ? null : <Badge x={run.nine[0]} y={run.nine[1]} digit={9} up={run.up} />}
          {run.tags.map(([x, y], i) => (
            <Badge key={i} x={x} y={y} digit={i + 1} />
          ))}
        </g>
      ))}
      <Line data={MA20} y0={11} color="#b9207c" />
      <Line data={MA10} y0={11} color="#f0b64c" />
      <Line data={MA5} y0={11} color="#222" />
      <Badge x={3043} y={437} digit={9} up />
      <Badge x={734} y={1479} digit={9} />
      {SIGNALS.map((s) => (
        <Signal key={s.x} {...s} />
      ))}
      <Badge x={1547} y={1043} digit={9} />
      <g fontSize={34} fill="#888">
        <text x={4} y={38}>9.38</text>
        <text x={4} y={156}>7.74</text>
        <text x={4} y={311}>6.09</text>
        <text x={4} y={466}>4.45</text>
        <text x={4} y={617}>2.81</text>
      </g>
      <g fontSize={34} fill="#222">
        <text x={925} y={37}>9.38</text>
        <path d="M997 26h15M1018 17l14 8-14 8" fill="none" stroke="#222" strokeWidth={2.500} />
        <text x={89} y={603}>2.87</text>
        <path d="M30 592H88M44 586 30 592l14 8" fill="none" stroke="#222" strokeWidth={2.500} />
      </g>
      <g fill="#ee2222">
        <circle cx={587.500} cy={601} r={8} />
        <circle cx={1017.500} cy={601} r={8} />
      </g>
    </svg>
  );
}

const CONTROLS = [
  { label: "最早", bg: "bg-[#fef1ea]", color: ORANGE, d: "M29 18 17 30l12 12M41 18 29 30l12 12" },
  { label: "缩小", bg: "bg-[#fef1ea]", color: ORANGE, d: "M16 30h28" },
  { label: "放大", bg: "bg-[#fef1ea]", color: ORANGE, d: "M16 30h28M30 16v28" },
  { label: "前移", bg: "bg-[#fef1ea]", color: ORANGE, d: "M35 17 22 30l13 13" },
  { label: "后移", bg: "bg-[#f1f1f1]", color: "#666", d: "M24 17l14 13-14 13" },
  { label: "全屏", bg: "bg-[#fef1ea]", color: ORANGE, d: "M17 29V17h12M17 17l12 11M44 31v12H32M44 43 32 32" },
];

function VolumeChart() {
  return (
    <svg viewBox="0 0 1056 226" className="block h-auto w-full">
      <rect x={0.500} y={1} width={1054.500} height={224} fill="none" stroke="#e2e2e2" strokeWidth={2} />
      {VOLUMES.map(({ up, top }, i) => {
        const y = top / UY - 66;
        return up ? (
          <rect key={i} x={barX(i) - 2.500} y={y + 1} width={5} height={223 - y} fill="#ffaaa2" stroke="#b93a37" strokeWidth={2} />
        ) : (
          <rect key={i} x={barX(i) - 2} y={y} width={4.400} height={225 - y} fill={GREEN} />
        );
      })}
      <Line data={VOL_MA1} y0={66} color="#eec12d" />
      <Line data={VOL_MA2} y0={66} color="#c731cd" />
      <Line data={VOL_MA3} y0={66} color="#1a8f1a" />
      <text x={2} y={44} fontSize={32} fill="#888">2017万</text>
    </svg>
  );
}

function KdjChart() {
  return (
    <svg viewBox="0 0 1056 225" className="block h-auto w-full">
      <rect x={0.500} y={1} width={1054.500} height={223} fill="none" stroke="#e2e2e2" strokeWidth={2} />
      <path d="M0 59.500H1056M0 112H1056M0 164H1056" stroke="#dadada" strokeWidth={1.500} strokeDasharray="10 8" />
      <g fontSize={29} fill="#ccc" textAnchor="end">
        <text x={1055} y={60}>80</text>
        <text x={1055} y={113}>50</text>
        <text x={1055} y={165}>20</text>
      </g>
      <Line data={KDJ_K} y0={348} color="#222" straight />
      <Line data={KDJ_D} y0={348} color="#eec12d" />
      <Line data={KDJ_J} y0={348} color="#c731cd" straight />
      <g fontSize={33} fill="#888">
        <text x={4} y={38}>113.85</text>
        <text x={4} y={221}>−14.73</text>
      </g>
    </svg>
  );
}

function Charts() {
  return (
    <section className="px-3">
      <div className="flex h-[54px] items-center px-1">
        <button className={`${CHIP} gap-1 px-[7px]`}>均线<Caret /></button>
        <Reading text="MA5:8.57" dir="up" color="#222" size="text-[32px]" className="ml-[10px] gap-2" />
        <Reading text="10:7.76" dir="up" color="#f0b64c" size="text-[32px]" className="ml-3 gap-1" />
        <Reading text="20:6.93" dir="up" color="#b9207c" size="text-[32px]" className="ml-3 gap-3" />
        <button className={`${CHIP} ml-auto gap-2 px-[10px]`}>
          DK点
          <svg width={11} height={11} viewBox="0 0 11 11" className="mt-4"><path d="M11 0v11H0z" fill="#222" /></svg>
        </button>
        <button className={`${CHIP} ml-[38px] px-[10px]`}>前复权</button>
      </div>
      <div className="relative">
        <div className="absolute bottom-[10px] left-[26px] flex w-[79%] justify-between">
          {CONTROLS.map((c) => (
            <button key={c.label} aria-label={c.label} className={`size-[60px] rounded-full ${c.bg}`}>
              <svg width={60} height={60} viewBox="0 0 60 60" fill="none" stroke={c.color} strokeWidth={2.600}>
                <path d={c.d} />
              </svg>
            </button>
          ))}
        </div>
        <PriceChart />
      </div>
      <div className="flex h-[55px] items-center pl-1">
        <button className={`${CHIP} gap-[14px] px-1`}>成交量<Caret /></button>
        <Reading text="1358万" dir="down" color="#222" size="text-[32px]" className="ml-1 gap-3" />
        <Reading text="MA1:1512万" dir="down" color="#eec12d" size="text-[32px]" className="ml-[18px] gap-[9px]" />
        <Reading text="MA2:1178万" dir="up" color="#c731cd" size="text-[32px]" className="ml-[18px] gap-3" />
        <Reading text="MA3:848.0万" dir="up" color="#159115" size="text-[32px]" className="ml-[18px] gap-3" />
        <button aria-label="展开" className="ml-auto grid h-[53px] w-[39px] place-items-center rounded-l-xl bg-[#999]">
          <svg width={16} height={26} viewBox="0 0 16 26" fill="none" stroke="#fff" strokeWidth={4}><path d="M14 3 3 13l11 10" /></svg>
        </button>
      </div>
      <VolumeChart />
      <div className="flex h-14 items-center pl-1">
        <button className={`${CHIP} gap-4 px-1`}>KDJ<Caret /></button>
        <Reading text="K:74.88" dir="down" color="#222" size="text-[34px]" className="ml-1 gap-3" />
        <Reading text="D:79.61" dir="down" color="#eec12d" size="text-[34px]" className="ml-[18px] gap-3" />
        <Reading text="J:65.41" dir="down" color="#c731cd" size="text-[34px]" className="ml-[18px] gap-3" />
      </div>
      <KdjChart />
      <div className="h-[74px] bg-[#f6f7fa] text-[30px] leading-none text-[#666]">
        <svg viewBox="0 0 1056 14" className="block h-auto w-full">
          <defs>
            <linearGradient id="fade" gradientUnits="userSpaceOnUse" x1="140" y1="0" x2="190" y2="0">
              <stop offset="0" stopColor="#666" stopOpacity="0" />
              <stop offset="1" stopColor="#666" />
            </linearGradient>
          </defs>
          <path d="M147 5.500H1052" stroke="url(#fade)" strokeWidth={7} strokeDasharray="1.200 3.800" />
          <path d="M342.500 2v11M697.500 2v11M1052.500 2v11" stroke="#666" strokeWidth={2.500} />
        </svg>
        <div className="grid grid-cols-[26%_34%_1fr_auto] pt-2 pr-1 pl-[6px]">
          <span>20241029</span>
          <span>20250211</span>
          <span>20250527</span>
          <span>20250904</span>
        </div>
      </div>
    </section>
  );
}

function Moves() {
  return (
    <section className="h-[130px] overflow-hidden">
      <div className="flex h-[90px] items-center border-b border-[#ececec] px-[26px]">
        <svg width={32} height={20} viewBox="0 0 32 20" fill="none" stroke={ORANGE} strokeWidth={3.500}>
          <path d="M2 18 16 3l14 15" />
        </svg>
        <h2 className="ml-2 bg-linear-to-b from-[#f58a1c] to-[#fb5a0c] bg-clip-text pr-2 text-[38px] leading-[48px] font-black text-transparent italic">个股异动</h2>
        <a href="#all" className="ml-auto flex items-center gap-[14px] text-[36px] text-[#999]">
          查看全部
          <svg width={20} height={32} viewBox="0 0 20 32" fill="none" stroke="#bbb" strokeWidth={2.500}>
            <path d="m2 1 15 15L2 31" />
          </svg>
        </a>
      </div>
      <div className="flex items-start gap-[42px] px-[31px] pt-[23px] text-[36px] leading-[48px] whitespace-nowrap text-[#555]">
        <button>全部</button>
        <button>自选股</button>
        <button>相关个股</button>
        <button className="font-medium text-[#d85a14]">岩山科技</button>
        <button aria-label="筛选设置" className="ml-auto pt-[3px]"><Gear size={40} color="#999" /></button>
      </div>
    </section>
  );
}

const ACTIONS = [
  {
    label: "交易",
    icon: (
      <>
        <path d="M14 6.500A24 24 0 0 1 50 38l6-4M43 45A24 24 0 0 1 7 14L0 17" />
        <path d="m19 15 9 9 9-9M28 24v15M19 24h18M19 32h18" />
      </>
    ),
  },
  {
    label: "发帖",
    icon: (
      <>
        <path d="M37 3H11Q5 3 5 9v34q0 6 6 6h34q6 0 6-6V17" />
        <path d="m20 34 2-7L40 9.500l4 4L26 31ZM42.500 7.500l4-4q2-1.500 4 0 1.500 2 0 4l-4 4Z" fill="#666" stroke="none" />
      </>
    ),
  },
  {
    label: "功能",
    icon: (
      <>
        <rect x={6} y={4} width={20} height={20} rx={3} />
        <rect x={6} y={29} width={20} height={20} rx={3} />
        <rect x={31} y={29} width={20} height={20} rx={3} />
        <path d="M39 4.500q1.500-1.500 3 0l8.500 8q1.500 1.500 0 3L42 24q-1.500 1.500-3 0l-8-8.500q-1.500-1.500 0-3Z" />
      </>
    ),
  },
  {
    label: "设自选",
    icon: (
      <>
        <circle cx={28} cy={26} r={23.500} />
        <g fill="#666" stroke="none">
          <circle cx={18} cy={26} r={2.600} />
          <circle cx={28} cy={26} r={2.600} />
          <circle cx={38} cy={26} r={2.600} />
        </g>
      </>
    ),
  },
];

function BottomBar() {
  return (
    <nav className="flex h-[119px] border-t border-[#d6d6d6] bg-[#f6f7fa]">
      <button className="flex w-[242px] flex-col items-center pt-2 text-[#0b9c0b]">
        <svg width={18} height={7} viewBox="0 0 18 7"><path d="M9 0l9 7H0z" fill="#777" /></svg>
        <span className="mt-2 text-[34px] leading-10">3765.88</span>
        <span className="flex w-full items-center justify-between pr-[2px] pl-9 text-[32px] leading-[44px]">
          <span className="text-[31px] text-[#666]">上证</span>
          −1.25%
        </span>
      </button>
      {ACTIONS.map((a) => (
        <button key={a.label} className="flex flex-1 flex-col items-center pt-2 text-[31px] text-[#666]">
          <svg width={56} height={52} viewBox="0 0 56 52" fill="none" stroke="#666" strokeWidth={2.400}>{a.icon}</svg>
          <span className="mt-3 leading-10">{a.label}</span>
        </button>
      ))}
    </nav>
  );
}

export default function App() {
  return (
    <div className="min-h-screen bg-white font-['Roboto','Noto_Sans_CJK_SC',sans-serif] text-[#222]">
      <div className="flex h-[76px] items-center justify-between pt-6 pr-[62px] pl-14">
        <span className="text-[38px] leading-none text-[#333]">23:23</span>
        <StatusIcons />
      </div>
      <Header />
      <div className="flex h-[105px] items-center justify-between bg-[#fdeee5] pr-[38px] pl-8 text-[36px] text-[#d85a14]">
        <p className="whitespace-nowrap">一键开通科创成长层权限！把握打新、交易机会</p>
        <button aria-label="关闭横幅">
          <svg width={30} height={30} viewBox="0 0 30 30" fill="none" stroke={ORANGE} strokeWidth={2.500}><path d="M2 2l26 26M28 2 2 28" /></svg>
        </button>
      </div>
      <Quote />
      <div className="flex h-[92px] items-center border-b border-[#d6d6d6] pr-[26px] pl-6">
        <svg width={48} height={38} viewBox="0 0 48 38" fill="none" stroke={ORANGE} strokeWidth={2.800} strokeLinejoin="round">
          <path d="M3 10h8L22 2v34L11 28H3Q2 28 2 27V11q0-1 1-1ZM29 12q6 7 0 14M31 3q9 2 12 8 3 8 0 16-3 6-12 8" />
        </svg>
        <p className="ml-6 text-[33px] whitespace-nowrap">自选分析：触发重点关注信号，立即点击查看</p>
        <button aria-label="关闭提示" className="ml-auto">
          <svg width={26} height={26} viewBox="0 0 26 26" fill="none" stroke="#999" strokeWidth={2.500}><path d="M1 1l24 24M25 1 1 25" /></svg>
        </button>
      </div>
      <Periods />
      <Charts />
      <Moves />
      <BottomBar />
      <div className="flex h-[124px] items-center justify-center gap-[200px] pr-2">
        <button aria-label="最近任务">
          <svg width={36} height={38} viewBox="0 0 36 38" stroke="#777" strokeWidth={5} strokeLinecap="round"><path d="M2.500 4.500h31M2.500 19h31M2.500 33.500h31" /></svg>
        </button>
        <button aria-label="主页">
          <svg width={38} height={40} viewBox="0 0 38 40" fill="none" stroke="#777" strokeWidth={4.500}><rect x={2.500} y={2.500} width={33} height={35} rx={7} /></svg>
        </button>
        <button aria-label="后退">
          <svg width={36} height={40} viewBox="0 0 36 40" fill="none" stroke="#777" strokeWidth={4.500} strokeLinecap="round" strokeLinejoin="round"><path d="M28 3 8 18q-2 2 0 4l20 15" /></svg>
        </button>
      </div>
    </div>
  );
}
